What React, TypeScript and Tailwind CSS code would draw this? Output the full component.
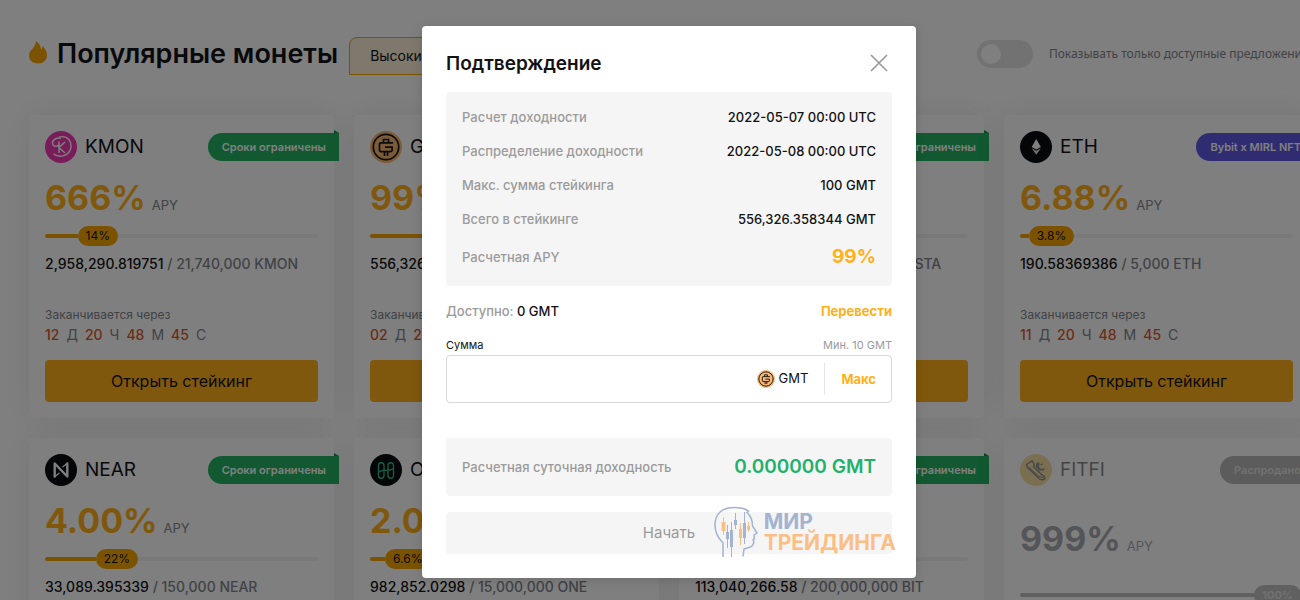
import { useState } from "react";
import type { ReactNode } from "react";

type Coin = {
  symbol: string;
  icon: ReactNode;
  apy: string;
  percent: number;
  staked: string;
  total: string;
  days: string;
  tag: string;
  tagColor: "green" | "purple" | "gray";
  soldOut?: boolean;
};

const GmtIcon = ({ className }: { className: string }) => (
  <svg viewBox="0 0 32 32" className={className} aria-hidden="true">
    <circle cx="16" cy="16" r="16" fill="#f9b771" />
    <circle cx="16" cy="16" r="12.700" fill="none" stroke="#15161a" strokeWidth="1.700" />
    <path
      d="M23 11.800H10.800a1.300 1.300 0 0 0-1.300 1.300v6.200a1.300 1.300 0 0 0 1.300 1.300h10a1.300 1.300 0 0 0 1.300-1.300v-3.100H15M13.500 11.500V8.500h5v3M14.500 21v4M17.500 21v4"
      fill="none"
      stroke="#15161a"
      strokeWidth="1.700"
    />
  </svg>
);

const KmonIcon = () => (
  <svg viewBox="0 0 32 32" className="size-8" aria-hidden="true">
    <circle cx="16" cy="16" r="16" fill="#f038b4" />
    <path
      d="M14 6.200c5-1.800 10 .8 11.500 5.300 1.800 5.500-1 11.500-6.500 13.200-4 1.200-8 .3-10.500-2"
      fill="none"
      stroke="#fff"
      strokeWidth="1.400"
    />
    <path
      d="M16 7c-5-.5-8.500 2-8.500 5.300 0 2.700 2.500 3.700 6 2.200M14 10.500V22M20 11l-6 5.500 6 5.500"
      fill="none"
      stroke="#fff"
      strokeWidth="1.500"
    />
  </svg>
);

const NearIcon = () => (
  <svg viewBox="0 0 32 32" className="size-8" aria-hidden="true">
    <circle cx="16" cy="16" r="16" fill="#0b0c10" />
    <path
      d="M9.700 22.500v-13L22.300 22.500v-13"
      fill="none"
      stroke="#fff"
      strokeWidth="2.400"
      strokeLinejoin="round"
      strokeLinecap="round"
    />
    <path d="m9.700 22.800 4.300-3.600M22.300 9.200 18 12.800" stroke="#fff" strokeWidth="1.300" strokeLinecap="round" />
  </svg>
);

const OneIcon = () => (
  <svg viewBox="0 0 32 32" className="size-8" aria-hidden="true">
    <circle cx="16" cy="16" r="16" fill="#0b0c10" />
    <path
      d="M8.500 11.500a2.750 2.750 0 0 1 5.500 0v10a2.750 2.750 0 0 1-5.500 0zM18 11.500a2.750 2.750 0 0 1 5.500 0v10a2.750 2.750 0 0 1-5.500 0zM8.500 18c2.500-2 5-1.700 7.500-1.700s5 .2 7.500-1.800"
      fill="none"
      stroke="#30c08a"
      strokeWidth="1.300"
    />
  </svg>
);

const EthIcon = () => (
  <svg viewBox="0 0 32 32" className="size-8" aria-hidden="true">
    <circle cx="16" cy="16" r="16" fill="#0b0c10" />
    <path d="M16.200 8 11.700 16l4.500 2.400 4.700-2.400z" fill="#fff" />
    <path d="M11.700 17.300l4.500 6.500 4.700-6.500-4.700 2.400z" fill="#dedede" />
  </svg>
);

const FitfiIcon = () => (
  <svg viewBox="0 0 32 32" className="size-8" aria-hidden="true">
    <circle cx="16" cy="16" r="16" fill="#f0c04e" />
    <path
      d="M6.500 10.500 12 6.800l2.200 3.400-.7 2.300 8.500 8.500c2.500 1 3.500 3 2.200 4.200-2 .8-4.700.2-6.200-1.700L7.500 13.500z"
      fill="none"
      stroke="#20242c"
      strokeWidth="1.500"
      strokeLinejoin="round"
    />
    <path d="m9.500 13.500 9.500 9 4.500 1.300" fill="none" stroke="#20242c" />
    <path d="m17 8 2.500 1-.5 4 2.500 3-1.500 1-4.500-4.500z" fill="#20242c" />
    <path d="m20.500 11 2.300-1.200M21 14.500l1.800 1.800 1.500-1.800" fill="none" stroke="#20242c" strokeWidth="1.200" />
  </svg>
);

const BlankIcon = () => <span className="size-8 rounded-full bg-[#0b0c10]" />;

const coins: Coin[] = [
  { symbol: "KMON", icon: <KmonIcon />, apy: "666%", percent: 14, staked: "2,958,290.819751", total: "21,740,000", days: "12", tag: "Сроки ограничены", tagColor: "green" },
  { symbol: "GMT", icon: <GmtIcon className="size-8" />, apy: "99%", percent: 44, staked: "556,326.358344", total: "1,250,000", days: "02", tag: "Сроки ограничены", tagColor: "green" },
  { symbol: "RASTA", icon: <BlankIcon />, apy: "99%", percent: 18, staked: "1,818,290.81975", total: "20,740,000", days: "12", tag: "Сроки ограничены", tagColor: "green" },
  { symbol: "ETH", icon: <EthIcon />, apy: "6.88%", percent: 3.8, staked: "190.58369386", total: "5,000", days: "11", tag: "Bybit x MIRL NFT", tagColor: "purple" },
  { symbol: "NEAR", icon: <NearIcon />, apy: "4.00%", percent: 22, staked: "33,089.395339", total: "150,000", days: "12", tag: "Сроки ограничены", tagColor: "green" },
  { symbol: "ONE", icon: <OneIcon />, apy: "2.00%", percent: 6.6, staked: "982,852.0298", total: "15,000,000", days: "12", tag: "Сроки ограничены", tagColor: "green" },
  { symbol: "BIT", icon: <BlankIcon />, apy: "5.00%", percent: 57, staked: "113,040,266.58", total: "200,000,000", days: "12", tag: "Сроки ограничены", tagColor: "green" },
  { symbol: "FITFI", icon: <FitfiIcon />, apy: "999%", percent: 100, staked: "20,000,000", total: "20,000,000", days: "00", tag: "Распродано", tagColor: "gray", soldOut: true },
];

const tagColors = {
  green: "bg-[#24b263]",
  purple: "bg-[#6058e2]",
  gray: "bg-[#b8b8b8]",
};

const foldColors = {
  green: "border-l-[#148a48]",
  purple: "border-l-[#443eb0]",
  gray: "border-l-[#989898]",
};

function CoinCard({ coin }: { coin: Coin }) {
  const { soldOut } = coin;
  const bar = soldOut ? "bg-[#c0c0c0]" : "bg-[#f7a600]";

  return (
    <li className="relative rounded bg-white p-4 shadow-[0_0_32px_rgba(0,0,0,0.08)]">
      <div className={`flex h-8 items-center gap-2 ${soldOut ? "opacity-50" : ""}`}>
        {coin.icon}
        <h2 className="pt-0.5 text-[19px] text-[#121214]">{coin.symbol}</h2>
      </div>
      <div className="absolute top-[15px] -right-[5px] flex flex-col items-end">
        <span className={`border-t-[3px] border-l-[5px] border-t-transparent ${foldColors[coin.tagColor]}`} />
        <span className={`rounded-l-full pr-[13px] pl-3.5 text-[11px] leading-7 font-semibold whitespace-nowrap ${soldOut ? "text-[#e2e2e2]" : "text-white"} ${tagColors[coin.tagColor]}`}>
          {coin.tag}
        </span>
      </div>

      <p className={`flex items-baseline gap-1.5 ${soldOut ? "mt-[33px] text-[#a8abb0]" : "mt-[15px] text-[#ffb11a]"}`}>
        <span className="text-[34px] leading-10 font-bold">{coin.apy}</span>
        <span className={`text-[13px] ${soldOut ? "" : "text-[#81858c]"}`}>APY</span>
      </p>

      <div className={`flex items-center ${soldOut ? "-mr-2 mt-[26px]" : "mt-2"}`}>
        <div className={`h-1 rounded-l-full ${bar}`} style={{ flex: `${coin.percent} 1 0%` }} />
        <span className={`rounded-full px-2 leading-5 ${bar} ${soldOut ? "text-[11px] font-bold text-[#e2e2e2]" : "text-[12px] text-[#121214]"}`}>
          {coin.percent}%
        </span>
        <div className="h-1 rounded-r-full bg-[#f2f2f2]" style={{ flex: `${100 - coin.percent} 1 0%` }} />
      </div>

      <p className="mt-1.5 text-[14px] leading-6 font-medium whitespace-nowrap text-[#81858c]">
        <span className="text-[#121214]">{coin.staked}</span> / {coin.total} {coin.symbol}
      </p>

      <p className="mt-[29px] text-[12px] leading-5 text-[#81858c]">Заканчивается через</p>
      <p className="flex gap-[7px] text-[14px] leading-5 text-[#81858c]">
        <b className="font-medium text-[#d9582a]">{coin.days}</b>Д
        <b className="font-medium text-[#d9582a]">20</b>Ч
        <b className="font-medium text-[#d9582a]">48</b>М
        <b className="font-medium text-[#d9582a]">45</b>С
      </p>
      <button type="button" disabled={soldOut} className="mt-[15px] w-full rounded bg-[#ffb11a] text-[16px] leading-[42px] text-[#121214]">
        Открыть стейкинг
      </button>
    </li>
  );
}

const details = [
  { label: "Расчет доходности", value: "2022-05-07 00:00 UTC" },
  { label: "Распределение доходности", value: "2022-05-08 00:00 UTC" },
  { label: "Макс. сумма стейкинга", value: "100 GMT" },
  { label: "Всего в стейкинге", value: "556,326.358344 GMT" },
];

function Watermark() {
  return (
    <div className="pointer-events-none absolute right-5 bottom-5 flex items-center gap-1.5">
      <svg viewBox="0 0 44 52" className="h-[52px] w-11" fill="none" aria-hidden="true">
        <path
          d="M9 51V37C4 32 1 26 1 19 1 7 9 1.500 20 1.500c6 0 11 1 14.500 3.500l-1.500 1.500c3.500 3 5.500 8 5.500 13.500l4.500 7-3 2 .5 3.500-1.500 1.500 1 2-1.500 3.500c-2 2.500-5 2-8.500 3.500l-1 7.500"
          stroke="#a3b3d1"
          strokeWidth="1.500"
        />
        <path d="M13.500 19v23M17.500 16v35M21.500 7v16M30.500 6v32" stroke="#a3b3d1" />
        <path d="M12 26h3v7h-3zM16 24h3v17h-3zM20 14h3v5h-3zM29 17h3v15h-3z" fill="#a3b3d1" />
        <path d="M9.500 11v18M26.500 17v22M34.500 16v10" stroke="#fbbf86" />
        <path d="M7.500 16h4v9h-4zM25 23h3v9h-3zM33 20h3v4h-3z" fill="#fbbf86" />
      </svg>
      <p className="text-[21px] leading-[21px] font-bold text-[#fbbf86]">
        <span className="block text-[#a3b3d1]">МИР</span>
        ТРЕЙДИНГА
      </p>
    </div>
  );
}

function ConfirmModal({ onClose }: { onClose: () => void }) {
  const [amount, setAmount] = useState("");

  return (
    <div className="absolute inset-0 flex items-start justify-center bg-black/50 pt-[26px]">
      <div role="dialog" aria-labelledby="modal-title" className="relative w-full max-w-[494px] rounded bg-white p-6 shadow-[0_2px_12px_rgba(0,0,0,0.15)]">
        <div className="flex h-[26px] items-center justify-between">
          <h2 id="modal-title" className="pt-0.5 text-[19px] font-semibold">
            Подтверждение
          </h2>
          <button type="button" aria-label="Закрыть" onClick={onClose} className="mr-1">
            <svg viewBox="0 0 18 18" className="size-[18px]" stroke="#9a9a9a" strokeWidth="1.700" aria-hidden="true">
              <path d="M1 1l16 16M17 1 1 17" />
            </svg>
          </button>
        </div>

        <dl className="mt-4 rounded bg-[#f5f5f5] px-4 py-2 text-[13px]">
          {details.map((row) => (
            <div key={row.label} className="flex items-center justify-between leading-[34px]">
              <dt className="font-medium text-[#9b9b9b]">{row.label}</dt>
              <dd className="font-medium">{row.value}</dd>
            </div>
          ))}
          <div className="flex items-center justify-between leading-[42px]">
            <dt className="font-medium text-[#9b9b9b]">Расчетная APY</dt>
            <dd className="text-[19px] font-bold text-[#ffb11a]">99%</dd>
          </div>
        </dl>

        <div className="mt-[15px] flex items-center justify-between text-[13px] leading-5">
          <p className="font-medium text-[#9b9b9b]">
            Доступно: <span className="text-[#121214]">0 GMT</span>
          </p>
          <a href="#transfer" className="font-bold text-[#ffb11a]">
            Перевести
          </a>
        </div>

        <div className="mt-3.5 flex items-center justify-between text-[11px] leading-5">
          <label htmlFor="amount">Сумма</label>
          <span className="text-[#9b9b9b]">Мин. 10 GMT</span>
        </div>
        <div className="flex h-12 items-center rounded border border-[#d8d8d8] pr-[15px] text-[13px]">
          <input
            id="amount"
            value={amount}
            onChange={(e) => setAmount(e.target.value)}
            className="h-full min-w-0 flex-1 px-4 outline-none"
          />
          <GmtIcon className="mr-1 size-[18px]" />
          <span>GMT</span>
          <button type="button" onClick={() => setAmount("100")} className="ml-4 border-l border-[#e6e6e6] pl-4 leading-8 font-bold text-[#ffb11a]">
            Макс
          </button>
        </div>

        <div className="mt-[35px] flex items-center justify-between rounded bg-[#f5f5f5] px-4 leading-[58px]">
          <span className="text-[13px] font-medium text-[#9b9b9b]">Расчетная суточная доходность</span>
          <span className="text-[19px] font-semibold text-[#20b26c]">0.000000 GMT</span>
        </div>

        <button type="button" disabled className="mt-4 w-full rounded bg-[#f5f5f5] text-[15px] leading-[42px] text-[#9b9b9b]">
          Начать
        </button>
        <Watermark />
      </div>
    </div>
  );
}

export default function App() {
  const [open, setOpen] = useState(true);
  const [onlyAvailable, setOnlyAvailable] = useState(false);
  const visible = onlyAvailable ? coins.filter((coin) => !coin.soldOut) : coins;

  return (
    <div className="h-screen overflow-hidden font-[Inter,'Noto_Sans',sans-serif] text-[#121214]">
      <div className="relative min-w-[1338px] bg-white">
        <main className="mx-auto max-w-7xl pt-[34px] pb-10">
          <header className="flex items-center">
            <svg viewBox="0 0 18 23" className="mr-2.5 mb-1 h-[23px] w-[18px]" fill="#f7a600" aria-hidden="true">
              <path d="M7 0c3 2 4.800 4.800 5 8.500 1-.8 1.500-2 1.500-3.500C16.500 8 18 11 18 14c0 5.500-4 8.500-9 8.500S0 19.500 0 14.500C0 11 2 9.500 4 7c1.800-2.200 2.800-4 3-7z" />
            </svg>
            <h1 className="text-[27px] font-semibold">Популярные монеты</h1>
            <button type="button" className="-mb-1 ml-[11px] rounded-t-lg border border-[#f7a600] bg-[#fff3db] px-5 text-[14px] leading-9">
              Высокий доход
            </button>
            <label className="ml-auto flex items-center gap-4 font-['Noto_Sans',sans-serif] text-[12px] text-[#81858c]">
              <input
                type="checkbox"
                checked={onlyAvailable}
                onChange={(e) => setOnlyAvailable(e.target.checked)}
                className="h-7 w-14 appearance-none rounded-full bg-[#e4e4e4] p-1 before:block before:size-5 before:rounded-full before:bg-white checked:bg-[#f7a600] checked:before:ml-auto"
              />
              Показывать только доступные предложения
            </label>
          </header>

          <ul className="mt-10 grid grid-cols-4 gap-5">
            {visible.map((coin) => (
              <CoinCard key={coin.symbol} coin={coin} />
            ))}
          </ul>
        </main>
        {open && <ConfirmModal onClose={() => setOpen(false)} />}
      </div>
    </div>
  );
}
